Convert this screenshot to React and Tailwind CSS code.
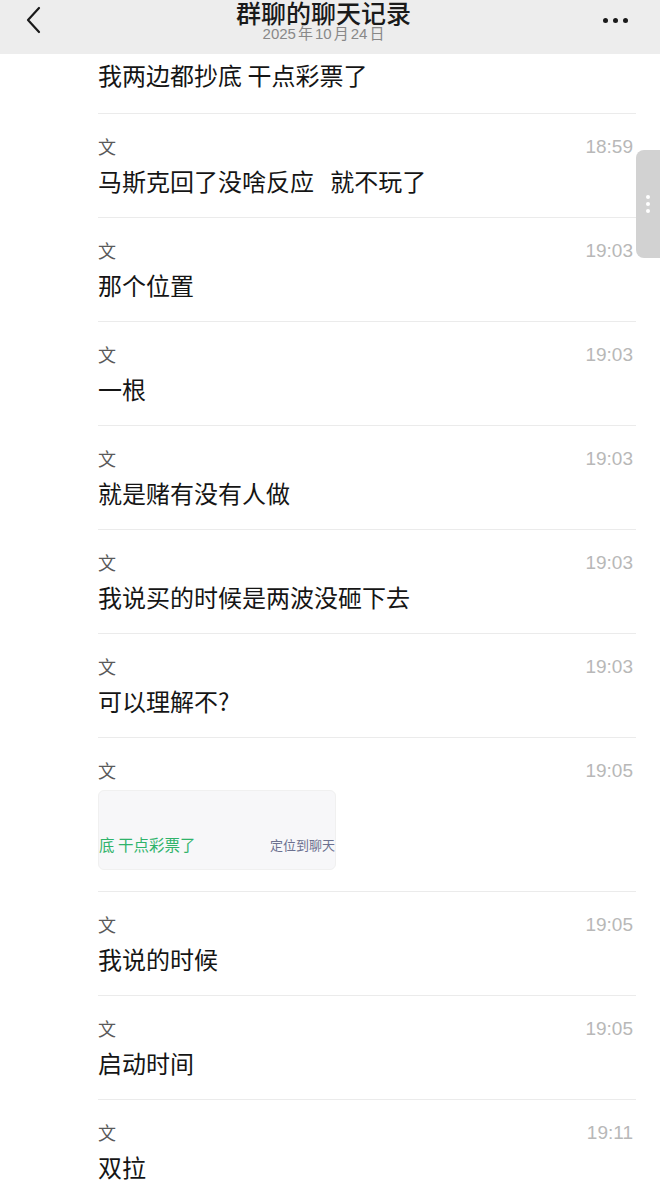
import React from "react";

const rows = [
  { time: "18:59", text: "马斯克回了没啥反应\u00a0\u00a0\u00a0就不玩了" },
  { time: "19:03", text: "那个位置" },
  { time: "19:03", text: "一根" },
  { time: "19:03", text: "就是赌有没有人做" },
  { time: "19:03", text: "我说买的时候是两波没砸下去" },
  { time: "19:03", text: "可以理解不?" },
  { time: "19:05", card: true },
  { time: "19:05", text: "我说的时候" },
  { time: "19:05", text: "启动时间" },
  { time: "19:11", text: "双拉" },
];

const cjk = { fontFamily: '"Noto Sans CJK SC", "Noto Sans", sans-serif' };
const latin = { fontFamily: '"Liberation Sans", Arial, "Noto Sans CJK SC", sans-serif' };

const Row = ({ row }) => (
  <div className="border-b border-[#ebebeb] pt-[22px] pb-[21px]">
    <div className="flex h-[20px] items-center justify-between">
      <span className="text-[18px] leading-none text-[#5a5a5a]" style={cjk}>文</span>
      <span className="pr-[3px] text-[19px] leading-none text-[#b8b8b8]" style={latin}>
        {row.time}
      </span>
    </div>
    {row.card ? (
      <div className="mt-[10px] flex h-[80px] w-[238px] items-end overflow-hidden rounded-[6px] border border-[#f0f0f0] bg-[#f7f7f9] pb-[17px]">
        <div className="flex w-full items-center justify-between whitespace-nowrap">
          <span className="text-[15.5px] leading-none text-[#2fb36b]" style={cjk}>底 干点彩票了</span>
          <span className="text-[13px] leading-none text-[#6c7190]" style={cjk}>定位到聊天</span>
        </div>
      </div>
    ) : (
      <div className="mt-[10px] h-[30px] text-[24px] leading-[30px] text-[#151515]" style={cjk}>
        {row.text}
      </div>
    )}
  </div>
);

export default function App() {
  return (
    <div className="relative h-[1200px] w-[660px] overflow-hidden bg-white">
      <div className="flex h-[54px] items-start justify-between bg-[#ededed] px-[24px]">
        <svg width="20" height="30" viewBox="0 0 20 30" className="mt-[5px]">
          <path d="M15 3 L4 15 L15 27" fill="none" stroke="#1a1a1a" strokeWidth="2.2" strokeLinecap="round" strokeLinejoin="round" />
        </svg>
        <div className="flex flex-col items-center">
          <div className="h-[24px] text-[25px] leading-[24px] font-medium text-[#1a1a1a]" style={cjk}>群聊的聊天记录</div>
          <div className="mt-[1px] text-[15px] leading-[18px] text-[#888]" style={latin}>
            2025<span className="mx-[2px]">年</span>10<span className="mx-[2px]">月</span>24<span className="ml-[2px]">日</span>
          </div>
        </div>
        <div className="mt-[18px] flex gap-[5px] pr-[8px]">
          <span className="h-[5px] w-[5px] rounded-full bg-[#1a1a1a]" />
          <span className="h-[5px] w-[5px] rounded-full bg-[#1a1a1a]" />
          <span className="h-[5px] w-[5px] rounded-full bg-[#1a1a1a]" />
        </div>
      </div>

      <div className="ml-[98px] mr-[24px]">
        <div className="border-b border-[#ebebeb] pt-[6px] pb-[23px]">
          <div className="h-[30px] text-[24px] leading-[30px] text-[#151515]" style={cjk}>我两边都抄底 干点彩票了</div>
        </div>
        {rows.map((row, i) => (
          <Row key={i} row={row} />
        ))}
      </div>

      <div className="absolute top-[150px] right-0 flex h-[108px] w-[24px] flex-col items-center justify-center gap-[3px] rounded-l-[8px] bg-[#d2d2d2]">
        <span className="h-[4px] w-[4px] rounded-full bg-white" />
        <span className="h-[4px] w-[4px] rounded-full bg-white" />
        <span className="h-[4px] w-[4px] rounded-full bg-white" />
      </div>
    </div>
  );
}
